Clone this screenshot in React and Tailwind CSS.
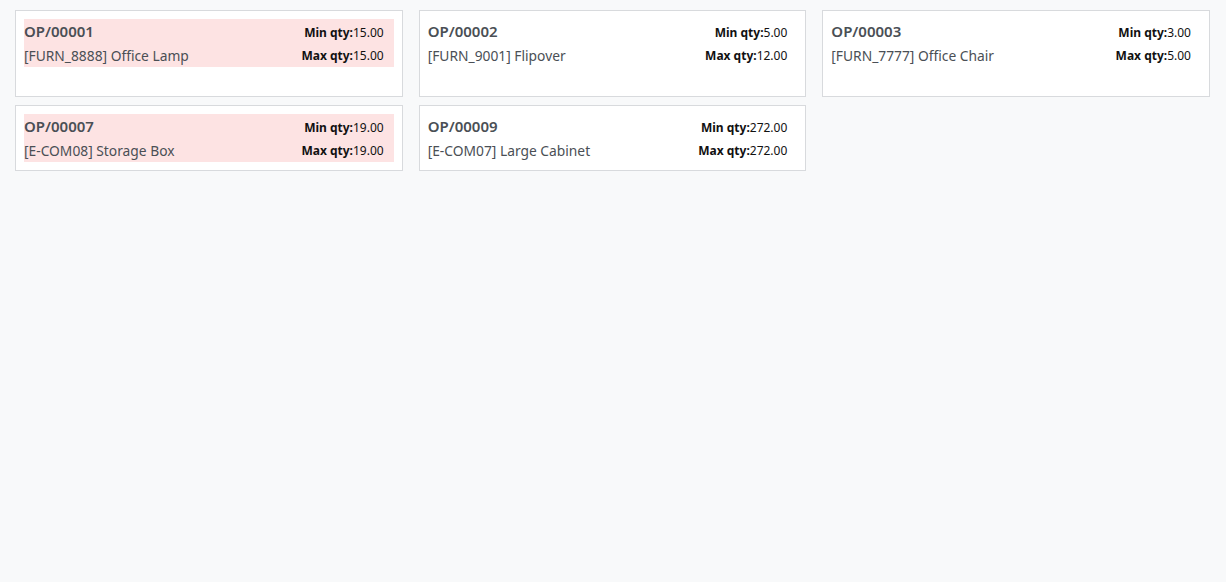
import React from "react";

const rows = [
  [
    { ref: "OP/00001", prod: "[FURN_8888] Office Lamp", min: "15.00", max: "15.00", red: true },
    { ref: "OP/00002", prod: "[FURN_9001] Flipover", min: "5.00", max: "12.00" },
    { ref: "OP/00003", prod: "[FURN_7777] Office Chair", min: "3.00", max: "5.00" },
  ],
  [
    { ref: "OP/00007", prod: "[E-COM08] Storage Box", min: "19.00", max: "19.00", red: true },
    { ref: "OP/00009", prod: "[E-COM07] Large Cabinet", min: "272.00", max: "272.00" },
  ],
];

function Card({ c, tall }) {
  return (
    <div className={`bg-white border border-[#d8dadd] p-2 ${tall ? "h-[87px]" : "h-[66px]"}`}>
      <div className={`flex justify-between ${c.red ? "bg-[#fde3e3]" : ""}`}>
        <div className="flex flex-col">
          <div className="h-[24px] flex items-center text-[15px] font-semibold text-[#4a4f55] leading-none">{c.ref}</div>
          <div className="h-[24px] flex items-center pt-[2px] text-[13.8px] text-[#4a4f55] leading-none">{c.prod}</div>
        </div>
        <div className="flex flex-col items-end pr-[10px]">
          <div className="h-[24px] flex items-center pt-[3px] text-[12px] font-bold text-[#111] leading-none">Min qty:<span className="font-normal">{c.min}</span></div>
          <div className="h-[24px] flex items-center pt-[2px] text-[12px] font-bold text-[#111] leading-none">Max qty:<span className="font-normal">{c.max}</span></div>
        </div>
      </div>
    </div>
  );
}

export default function App() {
  return (
    <div className="w-[1226px] h-[582px] bg-[#f8f9fa] pt-[10px] pl-[15px] pr-[16px]" style={{ fontFamily: '"Noto Sans", sans-serif' }}>
      <div className="grid grid-cols-3 gap-x-[16px] gap-y-[8px]">
        {rows.map((r, i) =>
          [0, 1, 2].map((j) => (r[j] ? <Card key={`${i}-${j}`} c={r[j]} tall={i === 0} /> : <div key={`${i}-${j}`} />))
        )}
      </div>
    </div>
  );
}
